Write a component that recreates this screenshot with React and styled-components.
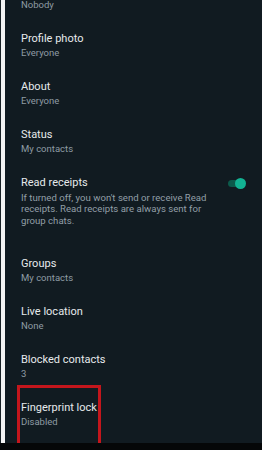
import React from "react";
import styled, { createGlobalStyle } from "styled-components";

const GlobalStyle = createGlobalStyle`
  html, body {
    margin: 0;
    padding: 0;
    background: #0a0d0f;
  }
  body {
    font-family: Roboto, "Liberation Sans", sans-serif;
  }
`;

const Screen = styled.div`
  width: 262px;
  height: 450px;
  display: flex;
  flex-direction: column;
  overflow: hidden;
  background: #050708;
`;

const Panel = styled.div`
  height: 443px;
  flex: none;
  display: flex;
  padding-left: 1px;
  background: #1a2227;
`;

const Sheet = styled.div`
  flex: 1;
  border-left: 4px solid #f4f4f4;
  background: #111b21;
  overflow: hidden;
`;

const List = styled.div`
  margin-top: -26px;
  display: flex;
  flex-direction: column;
`;

const Row = styled.div`
  position: relative;
  display: flex;
  align-items: flex-start;
  padding: 10px 17px ${(p) => p.$bottom || 10}px 16px;
`;

const Texts = styled.div`
  flex: 1;
  display: flex;
  flex-direction: column;
`;

const Title = styled.div`
  font-size: 11px;
  line-height: 14px;
  color: #e6eaec;
`;

const Sub = styled.div`
  font-size: 9.5px;
  line-height: 14px;
  color: #8f9ca4;
`;

const Note = styled.div`
  margin-top: 1.5px;
  font-size: 9.6px;
  line-height: 11.5px;
  color: #929fa7;
`;

const Toggle = styled.div`
  position: relative;
  flex: none;
  width: 17px;
  height: 7px;
  margin: 4px 0 0 8px;
  border-radius: 4px;
  background: #0c5a4b;
`;

const Thumb = styled.div`
  position: absolute;
  right: -1px;
  top: -2px;
  width: 11px;
  height: 11px;
  border-radius: 50%;
  background: #12b393;
`;

const Highlight = styled.div`
  position: absolute;
  left: 12px;
  top: -6px;
  width: 78px;
  height: 80px;
  border: 3px solid #c4161c;
  border-bottom: none;
`;

const rows = [
  { title: "Last seen", sub: "Nobody" },
  { title: "Profile photo", sub: "Everyone" },
  { title: "About", sub: "Everyone" },
  { title: "Status", sub: "My contacts" },
  {
    title: "Read receipts",
    note: "If turned off, you won't send or receive Read receipts. Read receipts are always sent for group chats.",
    toggle: true,
  },
  { title: "Groups", sub: "My contacts" },
  { title: "Live location", sub: "None" },
  { title: "Blocked contacts", sub: "3" },
  { title: "Fingerprint lock", sub: "Disabled", marked: true },
];

export default function App() {
  return (
    <>
      <GlobalStyle />
      <Screen>
        <Panel>
          <Sheet>
            <List>
              {rows.map((r) => (
                <Row key={r.title} $bottom={r.toggle ? 21 : 10}>
                  <Texts>
                    <Title>{r.title}</Title>
                    {r.sub && <Sub>{r.sub}</Sub>}
                    {r.note && <Note>{r.note}</Note>}
                  </Texts>
                  {r.toggle && (
                    <Toggle>
                      <Thumb />
                    </Toggle>
                  )}
                  {r.marked && <Highlight />}
                </Row>
              ))}
            </List>
          </Sheet>
        </Panel>
      </Screen>
    </>
  );
}
